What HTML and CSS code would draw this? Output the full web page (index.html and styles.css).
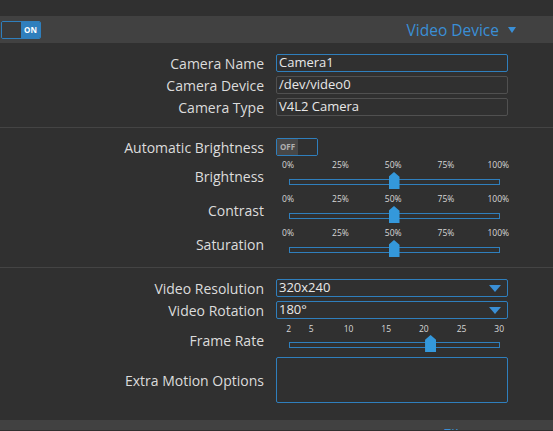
FILE: index.html
```html
<!DOCTYPE html>
<html>
<head>
<meta charset="utf-8">
<link rel="stylesheet" href="styles.css">
</head>
<body>
<div class="topband"></div>
<div class="section-head">
  <div class="toggle on"><span class="knob"></span><span class="lbl">ON</span></div>
  <div class="title">Video Device <span class="tri"></span></div>
</div>

<div class="group g1">
  <div class="row r-input"><div class="label">Camera Name</div><div class="ctrl"><div class="input focus">Camera1</div></div></div>
  <div class="row r-input"><div class="label">Camera Device</div><div class="ctrl"><div class="input">/dev/video0</div></div></div>
  <div class="row r-input"><div class="label">Camera Type</div><div class="ctrl"><div class="input">V4L2 Camera</div></div></div>
</div>
<div class="sep"></div>

<div class="group g2">
  <div class="row r-toggle"><div class="label">Automatic Brightness</div><div class="ctrl"><div class="toggle off"><span class="lbl">OFF</span><span class="knob"></span></div></div></div>
  <div class="row r-slider"><div class="label">Brightness</div><div class="ctrl">
    <div class="slider">
      <div class="ticks">
        <span style="left:0%">0%</span><span style="left:25%">25%</span><span style="left:50%">50%</span><span style="left:75%">75%</span><span style="left:100%">100%</span>
      </div>
      <div class="track"><div class="thumb" style="left:50%"></div></div>
    </div>
  </div></div>
  <div class="row r-slider"><div class="label">Contrast</div><div class="ctrl">
    <div class="slider">
      <div class="ticks">
        <span style="left:0%">0%</span><span style="left:25%">25%</span><span style="left:50%">50%</span><span style="left:75%">75%</span><span style="left:100%">100%</span>
      </div>
      <div class="track"><div class="thumb" style="left:50%"></div></div>
    </div>
  </div></div>
  <div class="row r-slider"><div class="label">Saturation</div><div class="ctrl">
    <div class="slider">
      <div class="ticks">
        <span style="left:0%">0%</span><span style="left:25%">25%</span><span style="left:50%">50%</span><span style="left:75%">75%</span><span style="left:100%">100%</span>
      </div>
      <div class="track"><div class="thumb" style="left:50%"></div></div>
    </div>
  </div></div>
</div>
<div class="sep"></div>

<div class="group g3">
  <div class="row r-input"><div class="label">Video Resolution</div><div class="ctrl"><div class="input select">320x240<span class="stri"></span></div></div></div>
  <div class="row r-input"><div class="label">Video Rotation</div><div class="ctrl"><div class="input select">180°<span class="stri"></span></div></div></div>
  <div class="row r-slider fr"><div class="label">Frame Rate</div><div class="ctrl">
    <div class="slider">
      <div class="ticks">
        <span style="left:0%">2</span><span style="left:10.71%">5</span><span style="left:28.57%">10</span><span style="left:46.43%">15</span><span style="left:64.29%">20</span><span style="left:82.14%">25</span><span style="left:100%">30</span>
      </div>
      <div class="track"><div class="thumb" style="left:67.5%"></div></div>
    </div>
  </div></div>
  <div class="row r-text"><div class="label">Extra Motion Options</div><div class="ctrl"><div class="textarea"></div></div></div>
</div>

<div class="section-head bottom">
  <div class="title b">File Storage</div>
</div>
</body>
</html>
```
FILE: styles.css
```css
html, body {
  margin: 0;
  padding: 0;
  background: #303030;
  width: 553px;
  height: 431px;
  overflow: hidden;
  font-family: "Open Sans", "DejaVu Sans", sans-serif;
  color: #dcdcdc;
}
.topband { height: 16px; }
.section-head {
  height: 27px;
  background: #414141;
  display: flex;
  align-items: center;
  justify-content: space-between;
  padding: 0 37px 0 1px;
}
.section-head.bottom {
  margin-top: 17px;
  height: 10px;
  align-items: flex-start;
  padding-left: 443px;
  justify-content: flex-start;
  overflow: hidden;
}
.title {
  color: #3a8fd6;
  font-size: 15.5px;
  display: flex;
  align-items: center;
}
.title.b { margin-top: 5px; line-height: 20px; }
.tri {
  width: 0; height: 0;
  margin-left: 9px;
  border-left: 4px solid transparent;
  border-right: 4px solid transparent;
  border-top: 6px solid #3a8fd6;
}
.toggle {
  box-sizing: border-box;
  height: 18px;
  border: 1px solid #2f7fbd;
  border-radius: 2px;
  display: flex;
  overflow: hidden;
}
.toggle.on { width: 40px; }
.toggle.on .knob { width: 19px; background: #3a3a3a; }
.toggle.on .lbl {
  flex: 1;
  background: #2f7fbd;
  color: #fff;
  font-size: 8px;
  font-weight: bold;
  display: flex; align-items: center; justify-content: center;
}
.toggle.off { width: 42px; }
.toggle.off .lbl {
  width: 21px;
  background: #474747;
  color: #b0b0b0;
  font-size: 8px;
  font-weight: bold;
  display: flex; align-items: center; justify-content: center;
  padding-bottom: 2px;
  box-sizing: border-box;
}
.toggle.off .knob { flex: 1; background: #303030; }

.group { display: flex; flex-direction: column; }
.g1 { padding: 11px 0 7px; }
.g2 { padding: 10px 0 7px; }
.g3 { padding: 11px 0 0; }
.sep { height: 1px; background: #444; }

.row { display: flex; align-items: center; }
.label {
  width: 264px;
  box-sizing: border-box;
  text-align: right;
  font-size: 14px;
  color: #dcdcdc;
}
.ctrl { margin-left: 12px; width: 232px; }
.r-input { height: 18px; margin-bottom: 4px; }
.input {
  box-sizing: border-box;
  height: 18px;
  border: 1px solid #505050;
  border-radius: 2px;
  font-size: 13px;
  line-height: 15px;
  padding-left: 2px;
  color: #e8e8e8;
  position: relative;
}
.input.focus { border-color: #2f7fbd; }
.input.select { border-color: #2f7fbd; }
.stri {
  position: absolute;
  right: 6px; top: 5px;
  width: 0; height: 0;
  border-left: 6.5px solid transparent;
  border-right: 6.5px solid transparent;
  border-top: 7px solid #3a8fd6;
}
.r-toggle { height: 18px; margin-bottom: 2px; }
.r-slider { height: 34px; }
.r-slider .label { padding-top: 2px; }
.slider { position: relative; height: 34px; }
.ticks { position: relative; height: 14px; margin: 0 8px 0 13px; }
.ticks span {
  position: absolute;
  top: 1px;
  transform: translateX(-58%);
  font-size: 8.5px;
  color: #d8d8d8;
  white-space: nowrap;
}
.track {
  position: relative;
  margin: 7px 8px 0 13px;
  height: 6px;
  box-sizing: border-box;
  border: 1px solid #2f7fbd;
  background: #303030;
}
.thumb {
  position: absolute;
  top: -8px;
  width: 11px;
  height: 17px;
  margin-left: -6px;
  background: #3498db;
  clip-path: polygon(50% 0, 100% 28%, 100% 100%, 0 100%, 0 28%);
}
.fr { height: 33px; }
.fr .slider { height: 33px; }
.fr .ticks { height: 12px; }
.fr .ticks span { top: 0; }
.r-text { height: 46px; margin-top: 1px; }
.textarea {
  box-sizing: border-box;
  height: 46px;
  border: 1px solid #2f7fbd;
  border-radius: 2px;
}
```
